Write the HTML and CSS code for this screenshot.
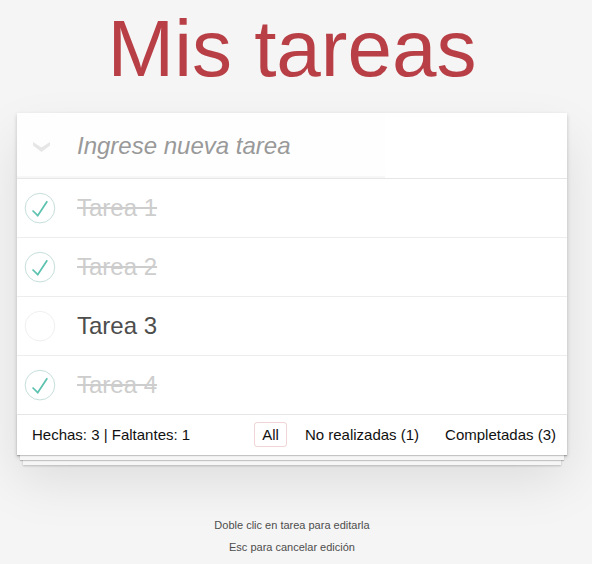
FILE: index.html
```html
<!DOCTYPE html>
<html lang="es">
<head>
<meta charset="utf-8">
<title>Mis tareas</title>
<link rel="stylesheet" href="styles.css">
</head>
<body>
<svg width="0" height="0" class="defs">
  <symbol id="done" viewBox="-10 -18 100 135" overflow="visible"><circle cx="50" cy="50" r="50" fill="none" stroke="#bddad5" stroke-width="3"/><path fill="#5dc2af" d="M72 25L42 71 27 56l-4 4 20 20 34-52z"/></symbol>
  <symbol id="open" viewBox="-10 -18 100 135" overflow="visible"><circle cx="50" cy="50" r="50" fill="none" stroke="#ededed" stroke-width="3"/></symbol>
</svg>
<h1>Mis tareas</h1>
<section class="todoapp">
  <header class="entry">
    <div class="entry-field"><svg class="toggle-all" viewBox="0 0 17 10"><path fill="#e6e6e6" d="M0 0L8.5 5.6 17 0V3.6L8.5 10 0 3.6z"/></svg><span class="placeholder">Ingrese nueva tarea</span></div>
  </header>
  <ul class="todo-list">
    <li class="completed"><svg class="toggle"><use href="#done"/></svg><label>Tarea 1</label></li>
    <li class="completed"><svg class="toggle"><use href="#done"/></svg><label>Tarea 2</label></li>
    <li><svg class="toggle"><use href="#open"/></svg><label>Tarea 3</label></li>
    <li class="completed"><svg class="toggle"><use href="#done"/></svg><label>Tarea 4</label></li>
  </ul>
  <footer class="footer">
    <span class="count">Hechas: 3 | Faltantes: 1</span>
    <nav class="filters">
      <a class="selected">All</a>
      <a class="pending">No realizadas (1)</a>
      <a>Completadas (3)</a>
    </nav>
  </footer>
</section>
<div class="info">
  <p>Doble clic en tarea para editarla</p>
  <p>Esc para cancelar edición</p>
</div>
</body>
</html>
```
FILE: styles.css
```css
* { box-sizing: border-box; }
html { background: #f5f5f5; }
body {
  margin: 0;
  padding: 1px 25px 0 17px;
  min-height: 564px;
  color: #4d4d4d;
  font-family: "Liberation Sans", Arial, sans-serif;
}
.defs { position: absolute; }
h1 {
  margin: 0;
  height: 112px;
  line-height: 95px;
  font-size: 80px;
  font-weight: 400;
  text-align: center;
  color: #b83f45;
}
.todoapp {
  background: #fff;
  box-shadow: 0 2px 4px 0 rgba(0,0,0,.2), 0 25px 50px 0 rgba(0,0,0,.1);
}
.entry { height: 65px; }
.entry-field {
  display: flex;
  align-items: center;
  width: 368px;
  height: 65px;
  background: rgba(0,0,0,.003);
  box-shadow: inset 0 -2px 1px rgba(0,0,0,.03);
}
.toggle-all {
  width: 17px;
  height: 10px;
  margin: 3px 27px 0 16px;
}
.placeholder {
  font-size: 24px;
  font-style: italic;
  color: #999;
}
.todo-list {
  margin: 0;
  padding: 0;
  list-style: none;
  border-top: 1px solid #e6e6e6;
}
.todo-list li {
  display: flex;
  align-items: center;
  height: 59px;
  border-bottom: 1px solid #ededed;
  font-size: 24px;
}
.todo-list li:last-child { height: 58px; border-bottom: 0; }
.toggle {
  width: 40px;
  height: 40px;
  margin-right: 20px;
  overflow: visible;
}
.completed label {
  color: #cdcdcd;
  text-decoration: line-through;
}
.footer {
  display: flex;
  align-items: center;
  justify-content: space-between;
  height: 41px;
  padding: 0 3px 2px 15px;
  border-top: 1px solid #e6e6e6;
  font-size: 15px;
  color: #111;
  box-shadow: 0 1px 1px rgba(0,0,0,.2), 0 8px 0 -3px #f6f6f6, 0 9px 1px -3px rgba(0,0,0,.2), 0 16px 0 -6px #f6f6f6, 0 17px 2px -6px rgba(0,0,0,.2);
}
.filters { display: flex; }
.filters a {
  height: 25px;
  line-height: 23px;
  padding: 0 7px;
  border: 1px solid transparent;
  border-radius: 3px;
}
.filters .selected { border-color: rgba(175,47,47,.2); }
.filters .pending { margin: 0 10px; }
.info {
  margin-top: 65px;
  font-size: 11px;
  text-align: center;
}
.info p { margin: 0 0 11px; line-height: 11px; }
```
